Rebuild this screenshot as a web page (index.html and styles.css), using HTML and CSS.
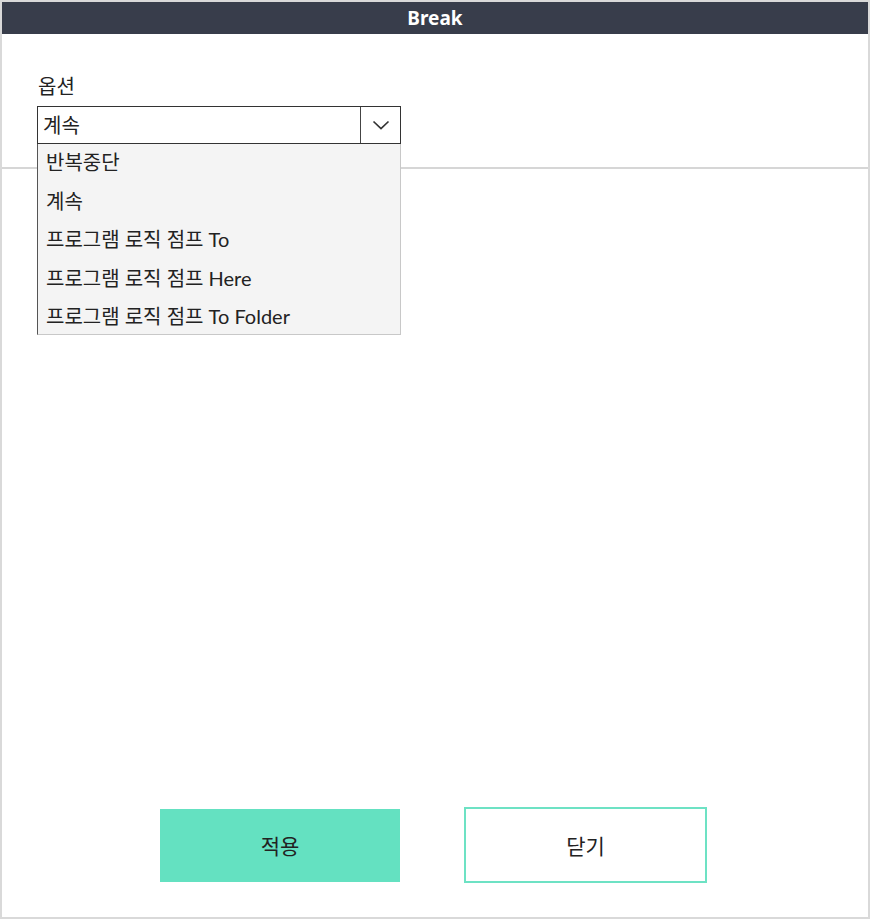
FILE: index.html
```html
<!DOCTYPE html>
<html lang="ko">
<head>
<meta charset="utf-8">
<link rel="stylesheet" href="styles.css">
</head>
<body>
<div class="window">
  <div class="titlebar">Break</div>
  <div class="body">
    <div class="top">
      <div class="label">옵션</div>
      <div class="select">
        <div class="value">계속</div>
        <div class="arrow">
          <svg width="18" height="10" viewBox="0 0 18 10"><path d="M1.5 1.5 L9 8.5 L16.5 1.5" fill="none" stroke="#333" stroke-width="1.7"/></svg>
        </div>
        <ul class="menu">
          <li>반복중단</li>
          <li>계속</li>
          <li>프로그램 로직 점프 To</li>
          <li>프로그램 로직 점프 Here</li>
          <li>프로그램 로직 점프 To Folder</li>
        </ul>
      </div>
    </div>
    <div class="content"></div>
    <div class="buttons">
      <button class="btn primary">적용</button>
      <button class="btn secondary">닫기</button>
    </div>
  </div>
</div>
</body>
</html>
```
FILE: styles.css
```css
* { box-sizing: border-box; }
html, body { margin: 0; padding: 0; background: #fff; }
body {
  font-family: "Lato", "Noto Sans CJK KR", sans-serif;
  color: #222;
}
.window {
  width: 870px;
  height: 919px;
  border: 2px solid #d9d9d9;
  display: flex;
  flex-direction: column;
}
.titlebar {
  height: 32px;
  background: #383d4b;
  color: #fff;
  font-weight: 700;
  font-size: 19px;
  line-height: 32px;
  text-align: center;
  font-family: "Noto Sans", "Noto Sans CJK KR", sans-serif;
}
.body {
  flex: 1;
  display: flex;
  flex-direction: column;
}
.top {
  height: 135px;
  padding: 40px 0 0 35px;
  border-bottom: 2px solid #d6d6d6;
}
.label {
  font-size: 20px;
  line-height: 24px;
  margin-bottom: 8px;
  padding-left: 1px;
}
.select {
  position: relative;
  width: 364px;
  height: 38px;
  border: 1px solid #333;
  display: flex;
  background: #fff;
}
.value {
  flex: 1;
  font-size: 20px;
  line-height: 36px;
  padding-left: 5px;
  border-right: 1px solid #444;
}
.arrow {
  width: 39px;
  display: flex;
  align-items: center;
  justify-content: center;
}
.menu {
  position: absolute;
  left: -1px;
  top: 37px;
  width: 364px;
  height: 191px;
  margin: 0;
  padding: 0 0 0 8px;
  list-style: none;
  background: #f4f4f4;
  border-left: 1px solid #555;
  border-right: 1px solid #c8c8c8;
  border-bottom: 1px solid #c8c8c8;
  z-index: 2;
}
.menu li {
  font-size: 20px;
  height: 38.5px;
  line-height: 36px;
}
.content { flex: 1; }
.buttons {
  display: flex;
  gap: 64px;
  padding: 0 0 34px 158px;
  align-items: center;
}
.btn {
  font-family: "Lato", "Noto Sans CJK KR", sans-serif;
  font-size: 21px;
  color: #222;
  cursor: pointer;
}
.primary {
  width: 240px;
  height: 73px;
  background: #64e1c1;
  border: none;
}
.secondary {
  width: 243px;
  height: 76px;
  background: #fff;
  border: 2px solid #6de2c4;
}
```
